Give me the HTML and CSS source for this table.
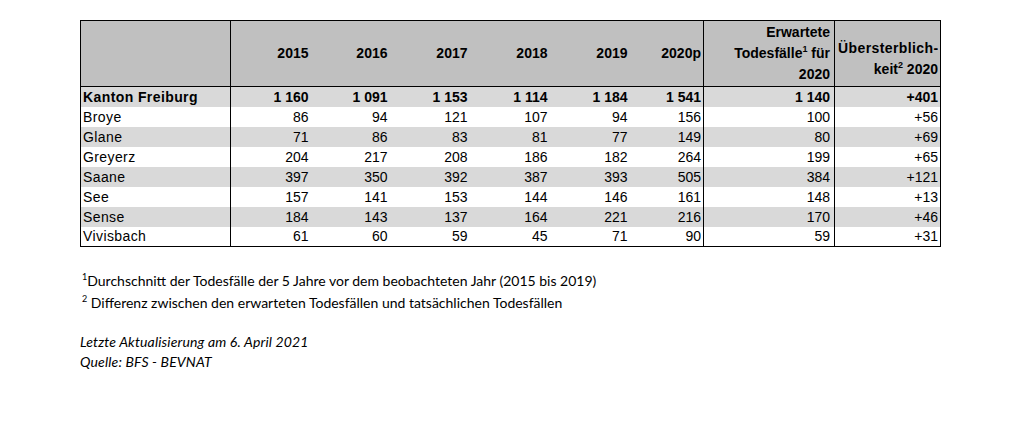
FILE: index.html
```html
<!DOCTYPE html>
<html lang="de">
<head>
<meta charset="utf-8">
<title>Übersterblichkeit Kanton Freiburg</title>
<link rel="stylesheet" href="styles.css">
</head>
<body>
<div class="page">
  <table class="data">
    <colgroup>
      <col class="c-name">
      <col class="c-y1"><col class="c-y2"><col class="c-y3"><col class="c-y4"><col class="c-y5"><col class="c-y6">
      <col class="c-exp">
      <col class="c-over">
    </colgroup>
    <thead>
      <tr>
        <th class="name sep"></th>
        <th>2015</th>
        <th>2016</th>
        <th>2017</th>
        <th>2018</th>
        <th>2019</th>
        <th class="sep">2020p</th>
        <th class="exp sep">Erwartete<br>Todesfälle<sup>1</sup> für<br>2020</th>
        <th class="over"><div class="clip"><span class="wide">Übersterblich-</span><br>keit<sup>2</sup> 2020</div></th>
      </tr>
    </thead>
    <tbody>
      <tr class="total shade">
        <td class="name sep">Kanton Freiburg</td>
        <td>1 160</td><td>1 091</td><td>1 153</td><td>1 114</td><td>1 184</td><td class="sep">1 541</td>
        <td class="exp sep">1 140</td><td class="over">+401</td>
      </tr>
      <tr>
        <td class="name sep">Broye</td>
        <td>86</td><td>94</td><td>121</td><td>107</td><td>94</td><td class="sep">156</td>
        <td class="exp sep">100</td><td class="over">+56</td>
      </tr>
      <tr class="shade">
        <td class="name sep">Glane</td>
        <td>71</td><td>86</td><td>83</td><td>81</td><td>77</td><td class="sep">149</td>
        <td class="exp sep">80</td><td class="over">+69</td>
      </tr>
      <tr>
        <td class="name sep">Greyerz</td>
        <td>204</td><td>217</td><td>208</td><td>186</td><td>182</td><td class="sep">264</td>
        <td class="exp sep">199</td><td class="over">+65</td>
      </tr>
      <tr class="shade">
        <td class="name sep">Saane</td>
        <td>397</td><td>350</td><td>392</td><td>387</td><td>393</td><td class="sep">505</td>
        <td class="exp sep">384</td><td class="over">+121</td>
      </tr>
      <tr>
        <td class="name sep">See</td>
        <td>157</td><td>141</td><td>153</td><td>144</td><td>146</td><td class="sep">161</td>
        <td class="exp sep">148</td><td class="over">+13</td>
      </tr>
      <tr class="shade">
        <td class="name sep">Sense</td>
        <td>184</td><td>143</td><td>137</td><td>164</td><td>221</td><td class="sep">216</td>
        <td class="exp sep">170</td><td class="over">+46</td>
      </tr>
      <tr>
        <td class="name sep">Vivisbach</td>
        <td>61</td><td>60</td><td>59</td><td>45</td><td>71</td><td class="sep">90</td>
        <td class="exp sep">59</td><td class="over">+31</td>
      </tr>
    </tbody>
  </table>

  <div class="notes">
    <p class="note"><sup>1</sup>Durchschnitt der Todesfälle der 5 Jahre vor dem beobachteten Jahr (2015 bis 2019)</p>
    <p class="note"><sup>2</sup> Differenz zwischen den erwarteten Todesfällen und tatsächlichen Todesfällen</p>
    <p class="meta first">Letzte Aktualisierung am 6. April 2021</p>
    <p class="meta">Quelle: BFS - BEVNAT</p>
  </div>
</div>
</body>
</html>
```

FILE: styles.css
```css
html, body {
  margin: 0;
  padding: 0;
  background: #ffffff;
}

.page {
  padding: 20px 0 0 80px;
}

.data {
  border-collapse: collapse;
  table-layout: fixed;
  width: 860px;
  border: 1px solid #000;
  font-family: "Liberation Sans", Arial, sans-serif;
  font-size: 14px;
  color: #000;
}

.c-name { width: 150px; }
.c-y1 { width: 80px; }
.c-y2 { width: 79px; }
.c-y3 { width: 80px; }
.c-y4 { width: 80px; }
.c-y5 { width: 80px; }
.c-y6 { width: 74px; }
.c-exp { width: 131px; }
.c-over { width: 106px; }

.data th,
.data td {
  padding: 0 2px;
  text-align: right;
  white-space: nowrap;
}

.data thead tr {
  height: 66px;
}

.data th {
  background: #c0c0c0;
  font-weight: bold;
  vertical-align: middle;
  border-bottom: 1px solid #000;
  line-height: 21px;
}

.data th.exp {
  padding-right: 4px;
}

.data th.over {
  padding: 10px 2px 0 3px;
  overflow: hidden;
}

.clip {
  overflow: hidden;
  text-align: right;
  line-height: 21px;
}

.wide {
  letter-spacing: 0.4px;
}

.data sup {
  font-size: 9px;
  line-height: 0;
  vertical-align: 6px;
}

.data tbody tr {
  height: 20px;
}

.data td {
  line-height: 19px;
  vertical-align: bottom;
}

.data td.exp {
  padding-right: 4px;
}

.data .name {
  text-align: left;
  letter-spacing: 0.4px;
}

.data .sep {
  border-right: 1px solid #000;
}

.data tr.shade td {
  background: #d9d9d9;
}

.data tr.total td {
  font-weight: bold;
}

.notes {
  margin-top: 23px;
  font-family: Lato, "Open Sans", sans-serif;
  font-size: 14px;
  color: #000;
}

.notes p {
  margin: 0;
  line-height: 22px;
}

.notes .note {
  padding-left: 2px;
}

.notes sup {
  font-size: 9px;
  line-height: 0;
  vertical-align: 6px;
}

.notes .meta {
  font-style: italic;
  line-height: 20px;
  letter-spacing: 0.15px;
}

.notes .meta.first {
  margin-top: 18px;
}
```
